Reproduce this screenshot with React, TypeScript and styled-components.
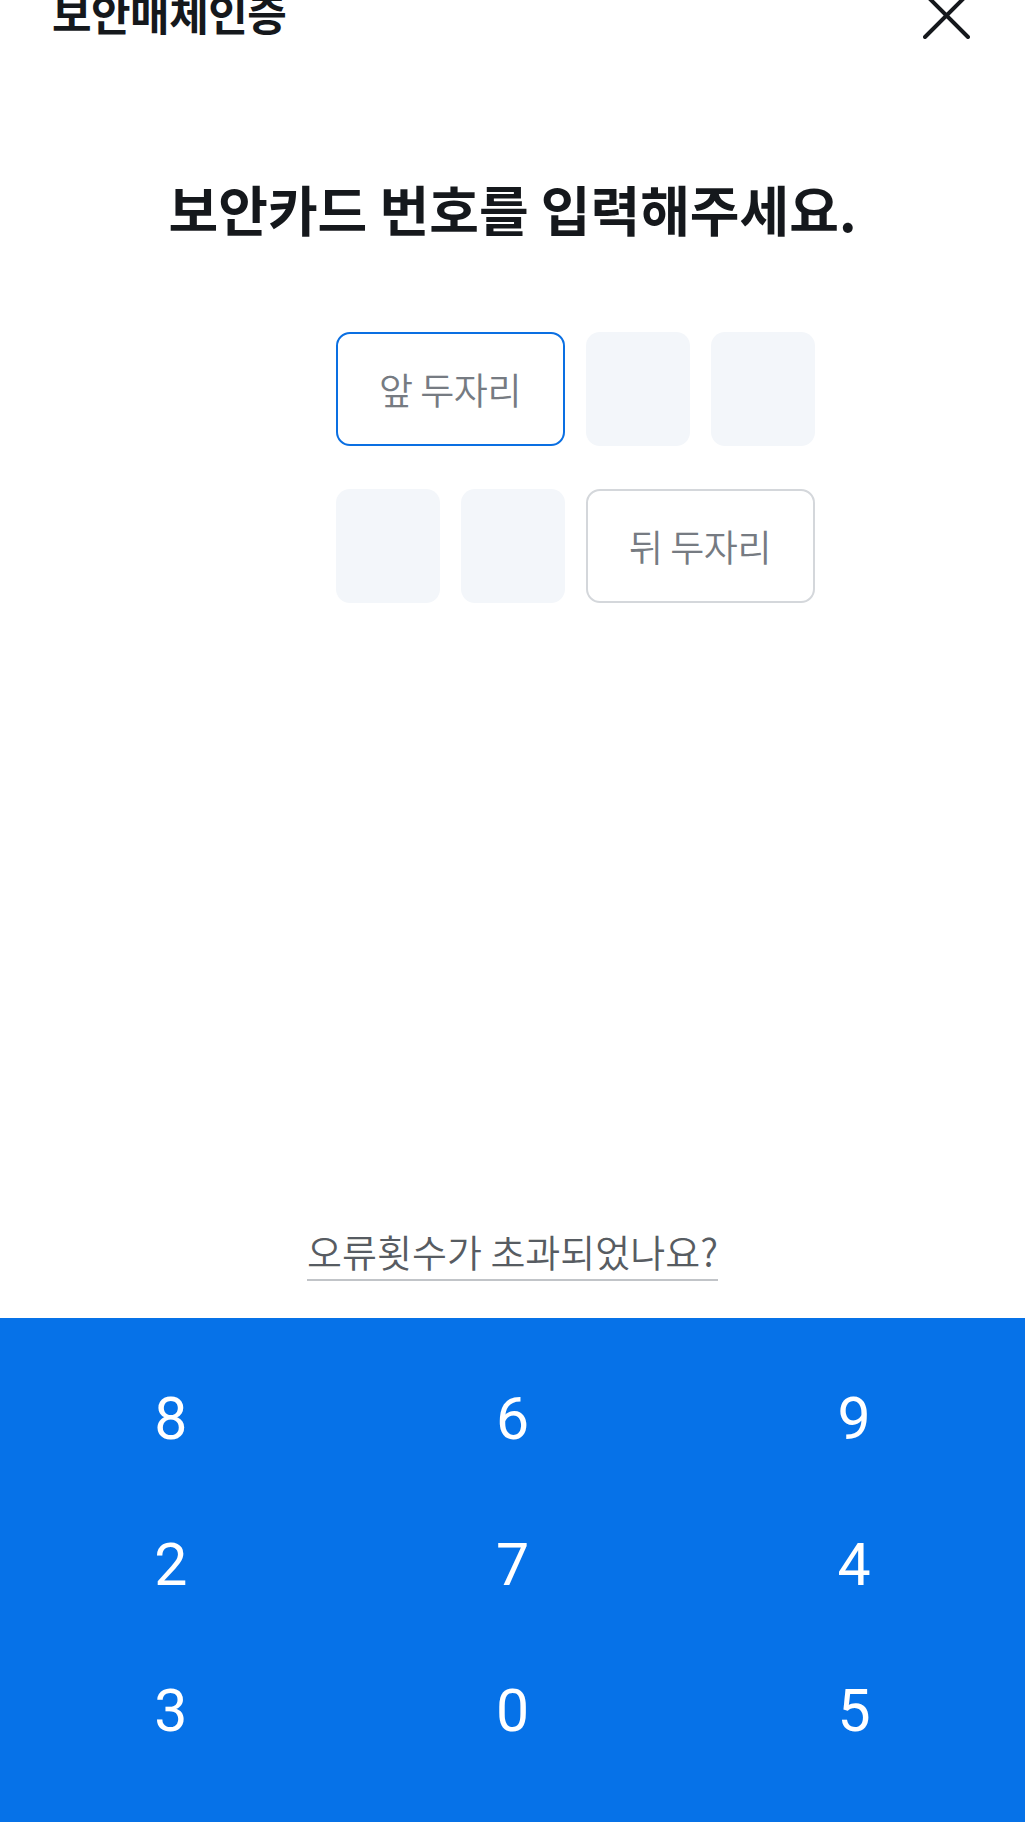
import React from "react";
import styled, { createGlobalStyle } from "styled-components";

const Global = createGlobalStyle`
  html, body { margin: 0; padding: 0; background: #ffffff; }
  body { font-family: "Noto Sans CJK KR", "Noto Sans", sans-serif; color: #111418; overflow: hidden; }
  * { box-sizing: border-box; }
`;

const Page = styled.div`
  display: flex;
  flex-direction: column;
  width: 100%;
  min-height: 1830px;
`;

const Header = styled.header`
  display: flex;
  justify-content: space-between;
  align-items: flex-start;
  margin-top: -8px;
  height: 50px;
  padding: 0 55px 0 52px;
`;

const Title = styled.h1`
  margin: 0;
  font-size: 43px;
  line-height: 40px;
  font-weight: 700;
  letter-spacing: -0.5px;
  color: #15181c;
`;

const CloseButton = styled.button`
  display: flex;
  padding: 0;
  border: 0;
  background: transparent;
  width: 47px;
  height: 47px;
`;

const Heading = styled.h2`
  margin: 135px 0 0;
  text-align: center;
  font-size: 54px;
  line-height: 64px;
  font-weight: 700;
  letter-spacing: 0;
  color: #15181c;
`;

const CodeGrid = styled.div`
  display: grid;
  grid-template-columns: repeat(5, 104px);
  grid-auto-rows: 114px;
  column-gap: 21px;
  row-gap: 43px;
  justify-content: center;
  margin-top: 91px;
`;

const Cell = styled.div<{ $wide?: boolean; $variant: "active" | "idle" | "filled"; $col: number }>`
  grid-column: ${(p) => (p.$wide ? `${p.$col} / span 2` : `${p.$col}`)};
  display: flex;
  align-items: center;
  justify-content: center;
  border-radius: 14px;
  background: ${(p) => (p.$variant === "filled" ? "#f3f6fa" : "#ffffff")};
  border: ${(p) =>
    p.$variant === "active"
      ? "2.5px solid #0a6fe2"
      : p.$variant === "idle"
      ? "2.5px solid #d4d7db"
      : "0"};
  font-size: 37px;
  font-weight: 350;
  letter-spacing: -0.5px;
  color: #767b82;
`;

const HelpWrap = styled.div`
  display: flex;
  justify-content: center;
  margin-top: 626px;
`;

const HelpLink = styled.a`
  display: inline-block;
  font-size: 38px;
  line-height: 43px;
  font-weight: 350;
  letter-spacing: 0;
  color: #575c62;
  text-decoration: none;
  padding-bottom: 7px;
  border-bottom: 2px solid #c1c4c8;
`;

const Keypad = styled.div`
  display: grid;
  grid-template-columns: repeat(3, 1fr);
  grid-auto-rows: 146px;
  align-content: start;
  margin-top: 37px;
  padding-top: 27px;
  background: #0672e8;
  flex: 1;
`;

const Key = styled.button`
  display: flex;
  align-items: center;
  justify-content: center;
  border: 0;
  background: transparent;
  color: #ffffff;
  font-family: Roboto, "Noto Sans", sans-serif;
  font-size: 59px;
  line-height: 1;
  font-weight: 400;
  padding: 0;
`;

const keys = ["8", "6", "9", "2", "7", "4", "3", "0", "5"];

export default function App() {
  return (
    <Page>
      <Global />
      <Header>
        <Title>보안매체인증</Title>
        <CloseButton aria-label="닫기">
          <svg width="47" height="47" viewBox="0 0 47 47" fill="none">
            <path d="M2 2 L45 45 M45 2 L2 45" stroke="#15181c" strokeWidth="4" strokeLinecap="round" />
          </svg>
        </CloseButton>
      </Header>
      <Heading>보안카드 번호를 입력해주세요.</Heading>
      <CodeGrid>
        <Cell $col={2} $wide $variant="active">앞 두자리</Cell>
        <Cell $col={4} $variant="filled" />
        <Cell $col={5} $variant="filled" />
        <Cell $col={2} $variant="filled" />
        <Cell $col={3} $variant="filled" />
        <Cell $col={4} $wide $variant="idle">뒤 두자리</Cell>
      </CodeGrid>
      <HelpWrap>
        <HelpLink href="#">오류횟수가 초과되었나요?</HelpLink>
      </HelpWrap>
      <Keypad>
        {keys.map((k) => (
          <Key key={k}>{k}</Key>
        ))}
      </Keypad>
    </Page>
  );
}
